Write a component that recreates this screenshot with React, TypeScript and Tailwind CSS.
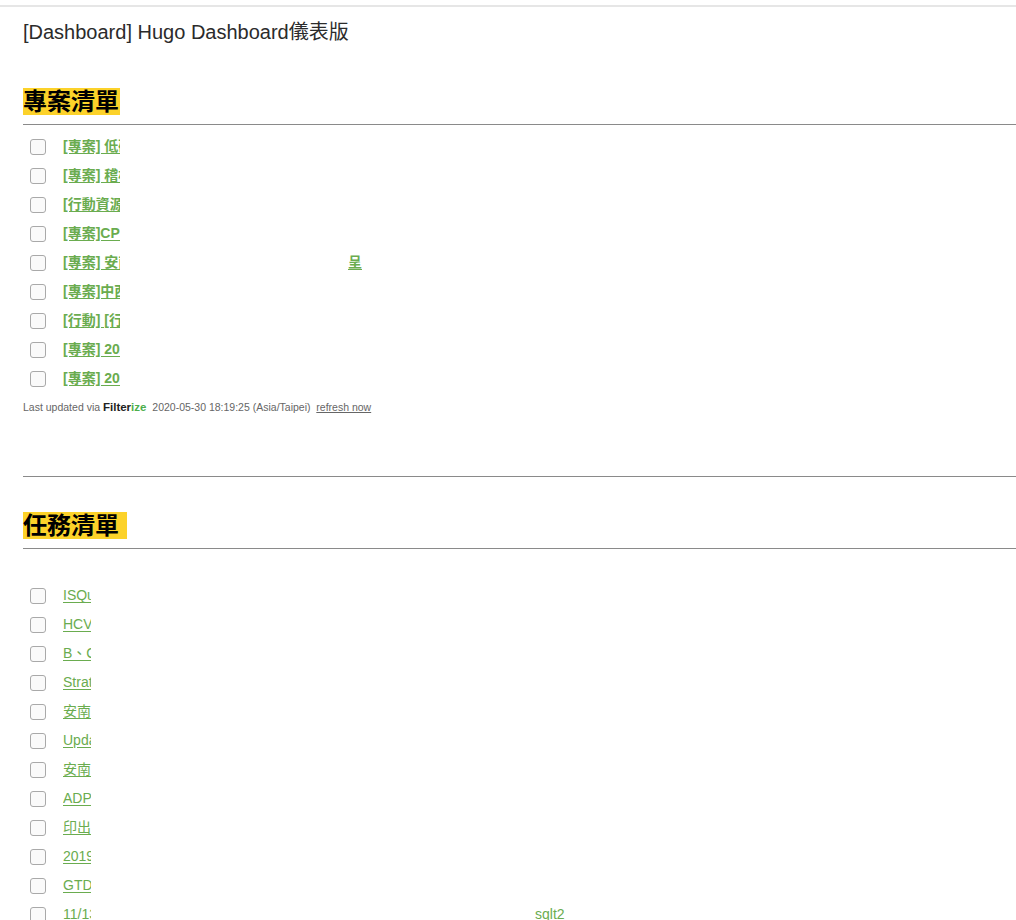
import * as React from "react"

const projects: { text: string; tail?: string }[] = [
  { text: "[專案] 低碳" },
  { text: "[專案] 稽核" },
  { text: "[行動資源" },
  { text: "[專案]CPE" },
  { text: "[專案] 安南", tail: "呈" },
  { text: "[專案]中西" },
  { text: "[行動] [行" },
  { text: "[專案] 2020" },
  { text: "[專案] 2020" },
]

const tasks: { text: string; tail?: string }[] = [
  { text: "ISQua" },
  { text: "HCVV" },
  { text: "B、C" },
  { text: "Strat" },
  { text: "安南區" },
  { text: "Update" },
  { text: "安南區" },
  { text: "ADP " },
  { text: "印出表" },
  { text: "2019" },
  { text: "GTD " },
  { text: "11/13", tail: "sqlt2" },
]

function Checkbox() {
  return (
    <span className="inline-block w-[16px] h-[16px] rounded-[3px] border border-[#a9a9a9] bg-[#fafafa] shrink-0" />
  )
}

function Row({
  text,
  tail,
  clip,
  bold,
  tailAt,
}: {
  text: string
  tail?: string
  clip: number
  bold?: boolean
  tailAt?: number
}) {
  return (
    <li className="flex items-center h-[29px]">
      <span className="ml-[7px] mr-[17px] flex items-center">
        <Checkbox />
      </span>
      <a
        className={
          "text-[14px] text-[#6aac4f] underline underline-offset-2 whitespace-nowrap overflow-hidden inline-block " +
          (bold ? "font-bold" : "font-normal")
        }
        style={{ width: clip }}
      >
        {text}
      </a>
      {tail && (
        <a
          className={
            "text-[14px] text-[#6aac4f] underline underline-offset-2 whitespace-nowrap " +
            (bold ? "font-bold" : "font-normal")
          }
          style={{ marginLeft: tailAt }}
        >
          {tail}
        </a>
      )}
    </li>
  )
}

function Heading({ children }: { children: React.ReactNode }) {
  return (
    <div className="flex border-b border-[#8a8a8a] pb-[9px]">
      <h2 className="bg-[#fcd22a] text-[24px] leading-[27px] font-bold text-black pr-[1px]">
        {children}
      </h2>
    </div>
  )
}

export default function App() {
  return (
    <div
      className="min-h-screen bg-white pt-[5px]"
      style={{ fontFamily: '"Liberation Sans", "Noto Sans CJK TC", sans-serif' }}
    >
      <div className="border-t-2 border-[#e6e6e6]">
        <div className="pl-[23px]">
          <h1 className="text-[20px] leading-[24px] text-[#2b2b2b] mt-[13px] font-normal">
            [Dashboard] Hugo Dashboard儀表版
          </h1>

          <div className="mt-[44px]">
            <Heading>專案清單</Heading>
          </div>
          <ul className="mt-[7px]">
            {projects.map((p, i) => (
              <Row key={i} text={p.text} tail={p.tail} clip={57} bold tailAt={228} />
            ))}
          </ul>
          <p className="mt-[6px] text-[10.5px] text-[#666] whitespace-nowrap">
            Last updated via{" "}
            <span className="font-bold text-[11.5px] text-[#222]">
              Filter<span className="text-[#4cae4c]">ize</span>
            </span>
            &nbsp; 2020-05-30 18:19:25 (Asia/Taipei) &nbsp;
            <span className="underline">refresh now</span>
          </p>

          <div className="mt-[60px] border-t border-[#8a8a8a]" />

          <div className="mt-[35px]">
            <Heading>任務清單&nbsp;</Heading>
          </div>
          <ul className="mt-[32px]">
            {tasks.map((t, i) => (
              <Row key={i} text={t.text} tail={t.tail} clip={28} tailAt={444} />
            ))}
          </ul>
        </div>
      </div>
    </div>
  )
}
